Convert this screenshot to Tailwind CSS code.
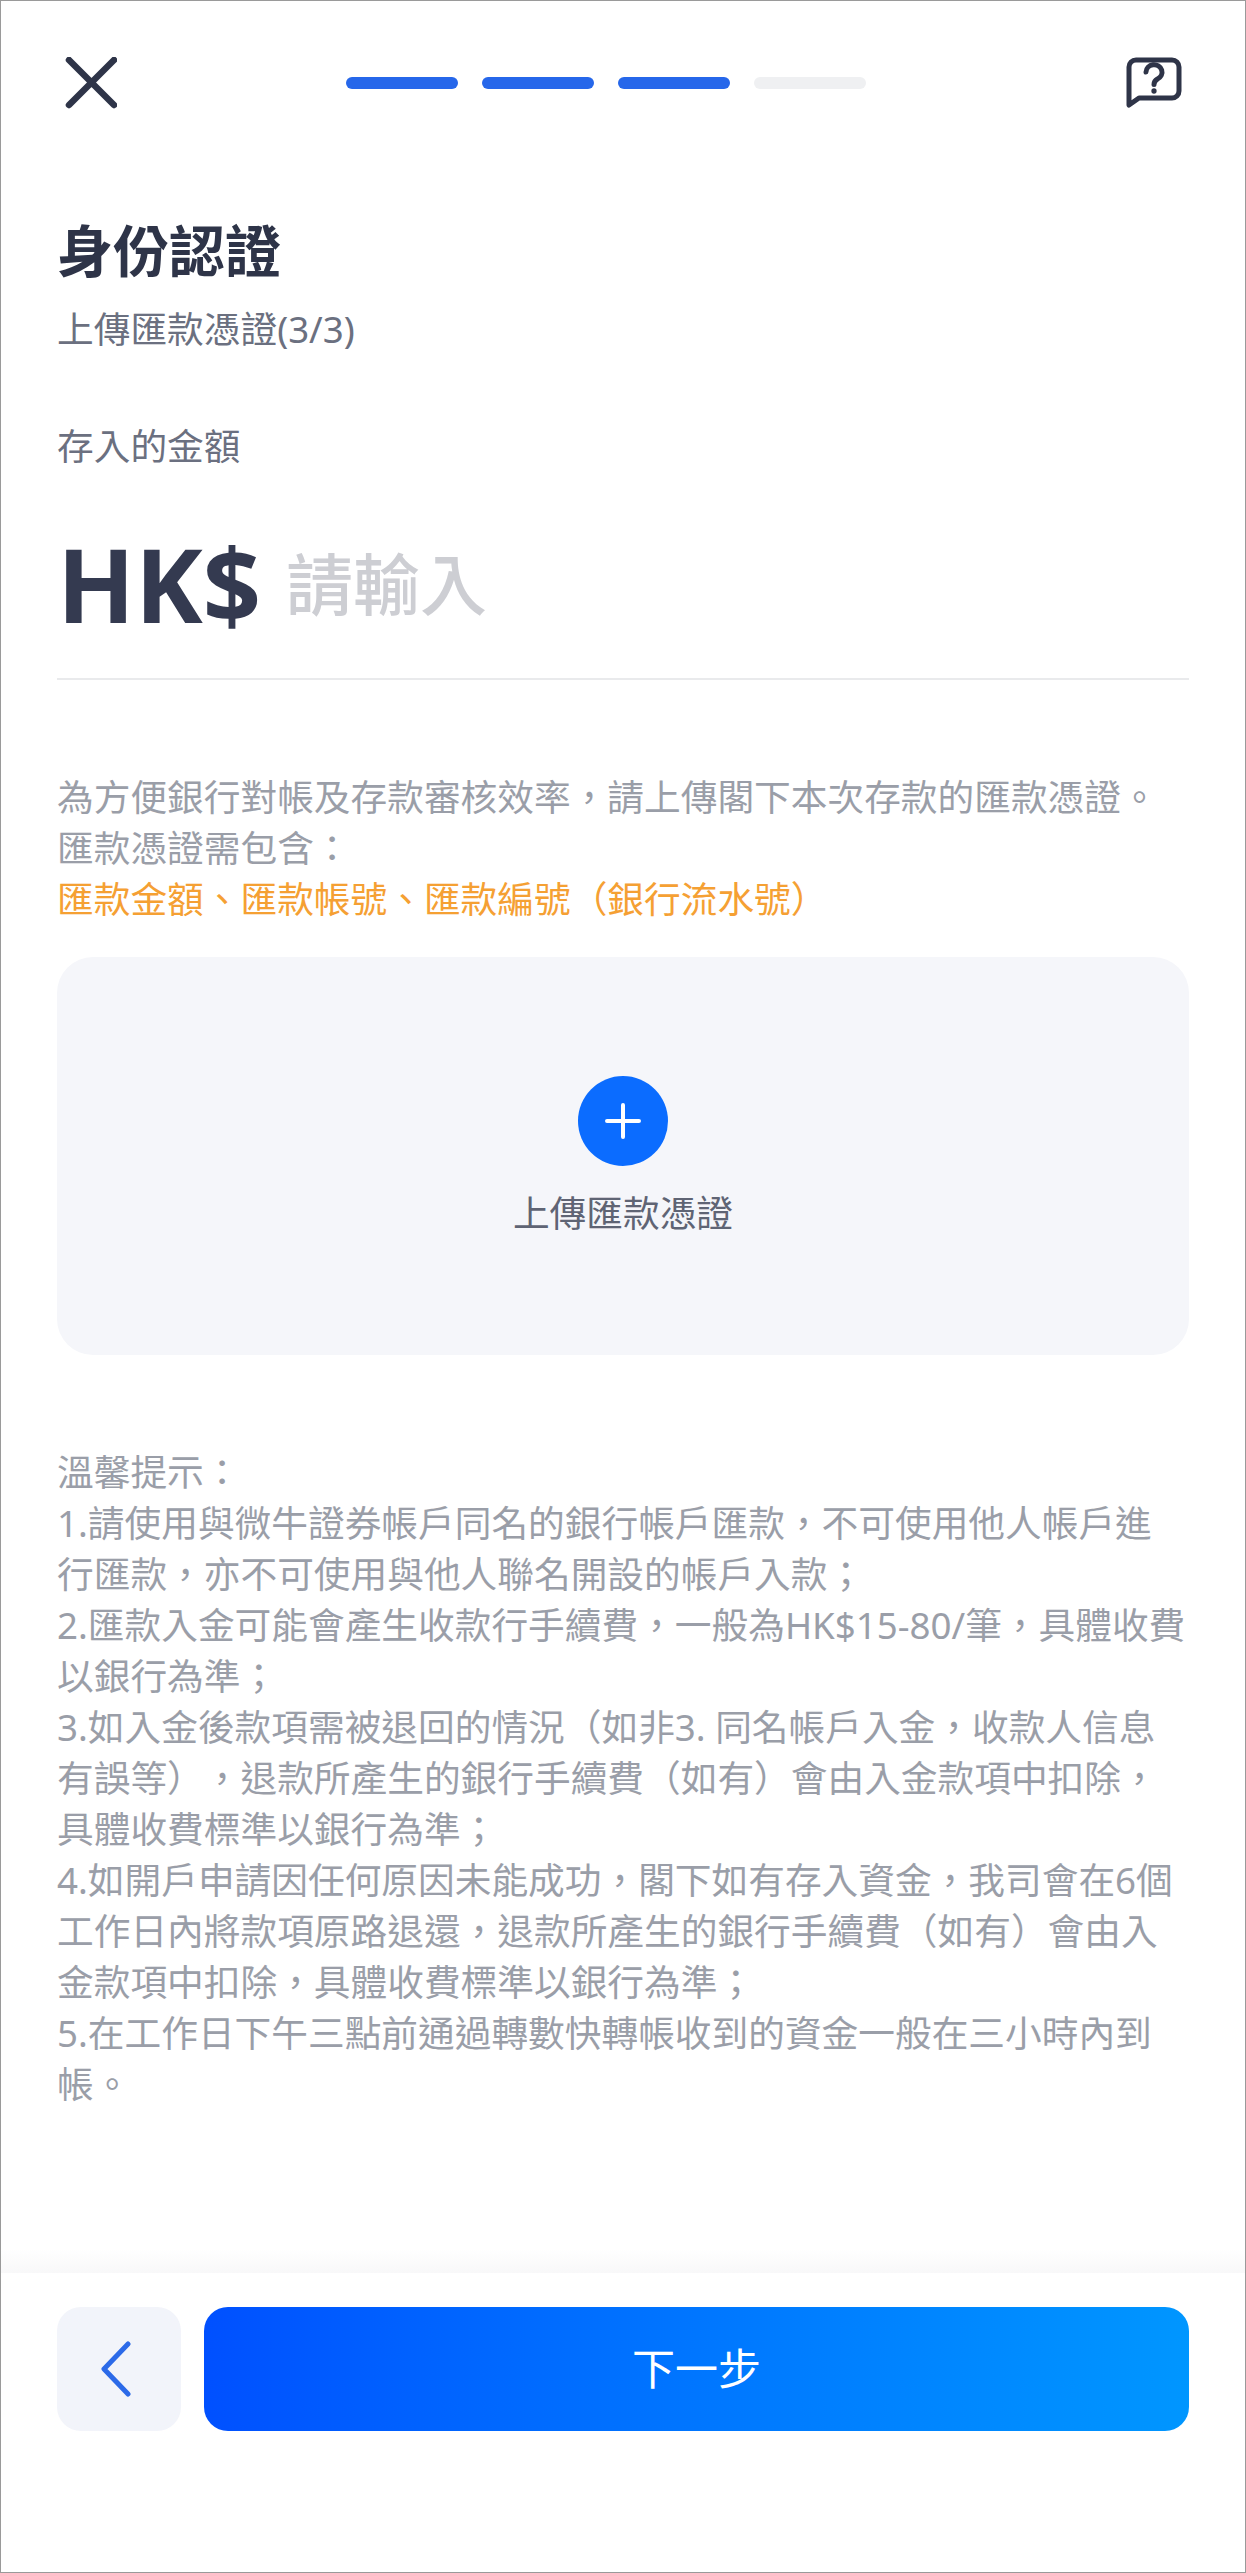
<!DOCTYPE html>
<html lang="zh-Hant">
<head>
<meta charset="utf-8">
<script src="https://cdn.jsdelivr.net/npm/@tailwindcss/browser@4"></script>
</head>
<body class="m-0 bg-white">
<div class="relative flex flex-col w-[1246px] h-[2573px] bg-white border border-[#9a9a9a] font-['Noto_Sans','Noto_Sans_CJK_TC',sans-serif] overflow-hidden [text-spacing-trim:space-all] whitespace-nowrap">
  <header class="flex items-center justify-between h-[164px] pl-[64px] pr-[62px] shrink-0">
    <svg class="w-[52px] h-[52px]" viewBox="0 0 52 52" fill="none" stroke="#2e3448" stroke-width="6.5" stroke-linecap="round"><path d="M4 3 L49 48 M49 3 L4 48"/></svg>
    <div class="flex gap-[24px] ml-[-31px]">
      <div class="w-[112px] h-[12px] rounded-full bg-[#2667ea]"></div>
      <div class="w-[112px] h-[12px] rounded-full bg-[#2667ea]"></div>
      <div class="w-[112px] h-[12px] rounded-full bg-[#2667ea]"></div>
      <div class="w-[112px] h-[12px] rounded-full bg-[#eff0f2]"></div>
    </div>
    <svg class="w-[58px] h-[52px]" viewBox="0 0 58 52" fill="none" stroke="#2e3448" stroke-width="5" stroke-linecap="round" stroke-linejoin="round"><path d="M4 48 V10 a7 7 0 0 1 7-7 H47 a7 7 0 0 1 7 7 V34 a7 7 0 0 1-7 7 H14 Z"/><path d="M21 15 a8 7.5 0 1 1 11.5 7 q-3.5 2-3.5 5.5"/><circle cx="29" cy="34" r="1.4" fill="#2e3448" stroke-width="2.5"/></svg>
  </header>

  <main class="flex-1 px-[56px]">
    <h1 class="text-[56px] leading-[76px] font-bold text-[#2e3448] mt-[47px]">身份認證</h1>
    <p class="text-[36.7px] leading-[50px] text-[#6b7080] mt-[16px]">上傳匯款憑證(3/3)</p>
    <p class="text-[36.7px] leading-[50px] text-[#6b7080] mt-[67px]">存入的金額</p>
    <div class="flex items-center h-[188px] mt-[19px]">
      <span class="text-[102px] leading-[150px] font-bold text-[#343a50]">HK$</span>
      <span class="text-[67px] leading-[150px] font-medium text-[#cdced3] ml-[25px]">請輸入</span>
    </div>
    <div class="h-[2px] bg-[#e9eaec]"></div>

    <div class="text-[36.7px] leading-[51px] text-[#9a9ea8] mt-[92px]">
      <p>為方便銀行對帳及存款審核效率，請上傳閣下本次存款的匯款憑證。</p>
      <p>匯款憑證需包含：</p>
      <p class="text-[#f5a033]">匯款金額、匯款帳號、匯款編號（銀行流水號）</p>
    </div>

    <div class="flex flex-col items-center w-[1132px] h-[398px] mt-[32px] rounded-[36px] bg-[#f5f6fa] pt-[119px]">
      <div class="flex items-center justify-center w-[90px] h-[90px] rounded-full bg-[#0b6cff]">
        <svg class="w-[36px] h-[36px]" viewBox="0 0 36 36" fill="none" stroke="#ffffff" stroke-width="4" stroke-linecap="round"><path d="M18 2 V34 M2 18 H34"/></svg>
      </div>
      <p class="text-[36.7px] leading-[50px] text-[#5f6474] mt-[22px]">上傳匯款憑證</p>
    </div>

    <div class="text-[36.7px] leading-[51px] text-[#9a9ea8] mt-[92px]">
      <p>溫馨提示：</p>
      <p>1.請使用與微牛證券帳戶同名的銀行帳戶匯款，不可使用他人帳戶進<br>行匯款，亦不可使用與他人聯名開設的帳戶入款；</p>
      <p>2.匯款入金可能會產生收款行手續費，一般為HK$15-80/筆，具體收費<br>以銀行為準；</p>
      <p>3.如入金後款項需被退回的情況（如非3. 同名帳戶入金，收款人信息<br>有誤等），退款所產生的銀行手續費（如有）會由入金款項中扣除，<br>具體收費標準以銀行為準；</p>
      <p>4.如開戶申請因任何原因未能成功，閣下如有存入資金，我司會在6個<br>工作日內將款項原路退還，退款所產生的銀行手續費（如有）會由入<br>金款項中扣除，具體收費標準以銀行為準；</p>
      <p>5.在工作日下午三點前通過轉數快轉帳收到的資金一般在三小時內到<br>帳。</p>
    </div>
  </main>

  <footer class="relative h-[299px] shrink-0 px-[56px] pt-[34px] flex gap-[23px] items-start">
    <div class="absolute left-0 right-0 top-[-24px] h-[24px] bg-gradient-to-b from-white to-[#f8f8f9]"></div>
    <button class="flex items-center justify-center w-[124px] h-[124px] rounded-[24px] bg-[#f2f4fa]">
      <svg class="w-[30px] h-[56px] mr-[6px]" viewBox="0 0 30 56" fill="none" stroke="#2c6ae8" stroke-width="5" stroke-linecap="round" stroke-linejoin="round"><path d="M27 3 L3 28 L27 53"/></svg>
    </button>
    <button class="flex items-center justify-center w-[985px] h-[124px] rounded-[24px] bg-gradient-to-r from-[#0050ff] to-[#0096ff] text-white text-[43px] font-normal">下一步</button>
  </footer>
</div>
</body>
</html>
